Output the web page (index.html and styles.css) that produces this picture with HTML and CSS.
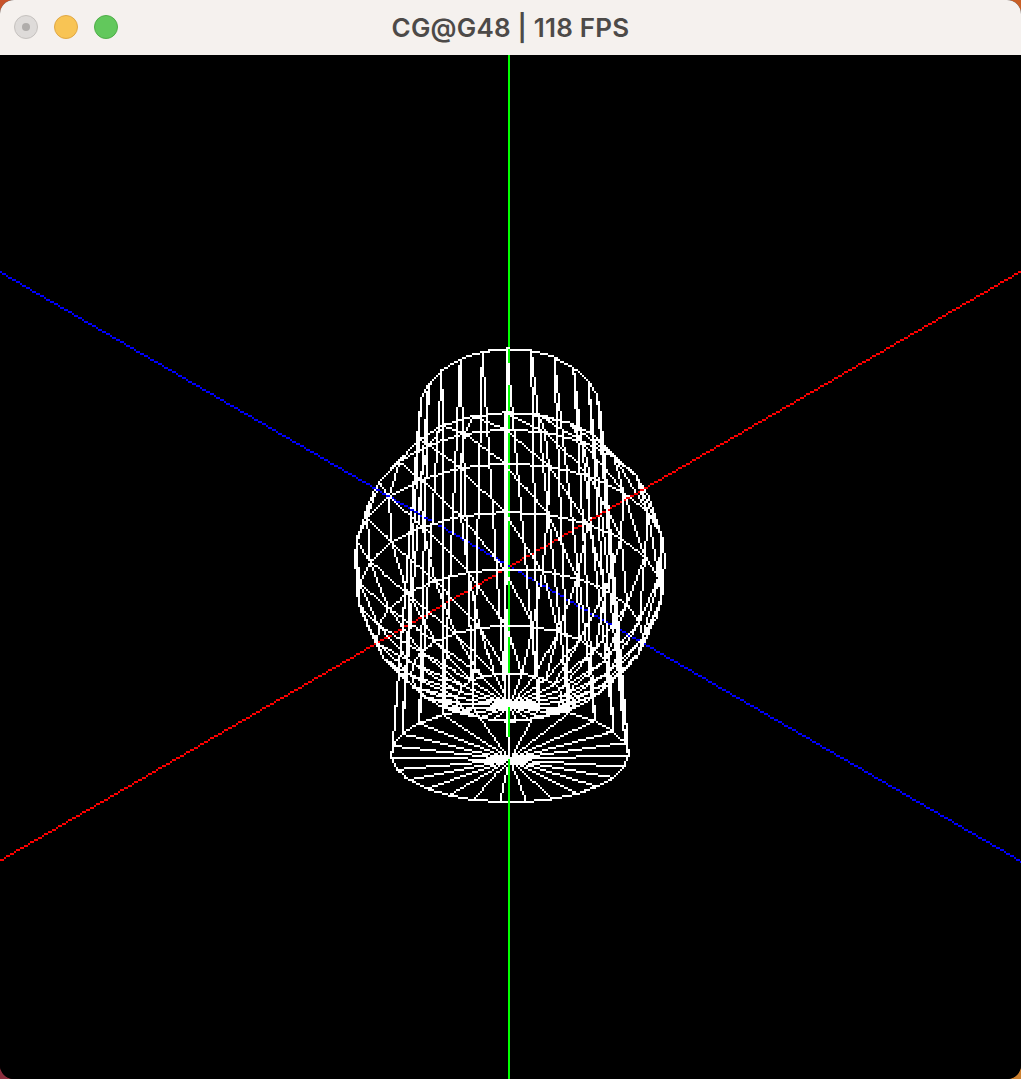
FILE: index.html
```html
<!DOCTYPE html>
<html lang="en">
<head>
    <meta charset="UTF-8">
    <title>CG@G48 | 118 FPS</title>
    <link rel="stylesheet" href="styles.css">
</head>
<body>
    <div class="window">
        <div class="titlebar">
            <div class="lights">
                <span class="light light-close"></span>
                <span class="light light-min"></span>
                <span class="light light-max"></span>
            </div>
            <div class="title">CG@G48 | 118 FPS</div>
        </div>
        <canvas id="view" class="view" width="511" height="512"></canvas>
    </div>
    <script src="app.js"></script>
</body>
</html>
```

FILE: styles.css
```css
html, body {
    margin: 0;
    padding: 0;
    height: 100%;
}
body {
    width: 1021px;
    height: 1079px;
    overflow: hidden;
    background:
        linear-gradient(90deg, #c8522a, #c95f25) top / 100% 50% no-repeat,
        linear-gradient(90deg, #8a2c3c, #cc802f) bottom / 100% 50% no-repeat;
}
.window {
    width: 1021px;
    height: 1079px;
    border-radius: 14px;
    overflow: hidden;
    display: flex;
    flex-direction: column;
    background: #000;
}
.titlebar {
    height: 55px;
    flex: none;
    position: relative;
    display: flex;
    align-items: center;
    justify-content: center;
    background: #f5f1ee;
}
.lights {
    position: absolute;
    left: 14px;
    top: 15px;
    display: flex;
    gap: 16px;
}
.light {
    width: 24px;
    height: 24px;
    box-sizing: border-box;
    border-radius: 50%;
    border: 1px solid;
    display: flex;
    align-items: center;
    justify-content: center;
}
.light-close {
    background: #dedbd9;
    border-color: #c6c2bf;
}
.light-close::after {
    content: "";
    width: 8px;
    height: 8px;
    border-radius: 50%;
    background: #b0adab;
}
.light-min {
    background: #f8c454;
    border-color: #e0a845;
}
.light-max {
    background: #62c85c;
    border-color: #4fae48;
}
.title {
    font-family: Inter, "Liberation Sans", sans-serif;
    font-size: 26px;
    font-weight: 600;
    letter-spacing: 0.2px;
    color: #4d4a48;
    white-space: nowrap;
}
.view {
    display: block;
    flex: none;
    width: 1022px;
    height: 1024px;
    image-rendering: pixelated;
}
```

FILE: app.js
```js
// wireframe scene: sphere + cylinder on the y axis, camera at (5,-5,5), 60 deg fov
const canvas = document.getElementById('view');
const ctx = canvas.getContext('2d');
const W = canvas.width, H = canvas.height;
const img = ctx.createImageData(W, H);
const zbuf = new Float32Array(W * H).fill(Infinity);

const SLICES = 25, STACKS = 10;
const WHITE = [255, 255, 255], RED = [255, 0, 0], GREEN = [0, 255, 0], BLUE = [0, 0, 255];

const eye = [5, -5, 5];
const R = [Math.SQRT1_2, 0, -Math.SQRT1_2];
const U = [1 / Math.sqrt(6), 2 / Math.sqrt(6), 1 / Math.sqrt(6)];
const F = [-1 / Math.sqrt(3), 1 / Math.sqrt(3), -1 / Math.sqrt(3)];
const focal = 256 / Math.tan(Math.PI / 6);
const CX = 254.9, CY = 255.8;
const NEAR = 1;

function dot(a, b) { return a[0] * b[0] + a[1] * b[1] + a[2] * b[2]; }

function toView(p) {
    const d = [p[0] - eye[0], p[1] - eye[1], p[2] - eye[2]];
    return [dot(d, R), dot(d, U), dot(d, F)];
}

function plot(x, y, z, c) {
    if (x < 0 || y < 0 || x >= W || y >= H) return;
    const i = y * W + x;
    if (z > zbuf[i]) return;
    zbuf[i] = z;
    img.data[i * 4] = c[0];
    img.data[i * 4 + 1] = c[1];
    img.data[i * 4 + 2] = c[2];
}

function line(p, q, c) {
    let a = toView(p), b = toView(q);
    if (a[2] < NEAR && b[2] < NEAR) return;
    if (a[2] < NEAR || b[2] < NEAR) {
        const t = (NEAR - a[2]) / (b[2] - a[2]);
        const m = [a[0] + (b[0] - a[0]) * t, a[1] + (b[1] - a[1]) * t, NEAR];
        if (a[2] < NEAR) a = m; else b = m;
    }
    const x0 = CX + a[0] * focal / a[2], y0 = CY - a[1] * focal / a[2];
    const x1 = CX + b[0] * focal / b[2], y1 = CY - b[1] * focal / b[2];
    const n = Math.ceil(Math.max(Math.abs(x1 - x0), Math.abs(y1 - y0))) || 1;
    for (let i = 0; i <= n; i++) {
        const t = i / n;
        // perspective correct depth
        const iz = (1 - t) / a[2] + t / b[2];
        plot(Math.floor(x0 + (x1 - x0) * t), Math.floor(y0 + (y1 - y0) * t), 1 / iz, c);
    }
}

function tri(a, b, c) {
    line(a, b, WHITE);
    line(b, c, WHITE);
    line(c, a, WHITE);
}

// back face culling: n is the surface normal at point c
function faces(n, c) {
    return dot(n, [eye[0] - c[0], eye[1] - c[1], eye[2] - c[2]]) > 0;
}

function center(a, b, c) {
    return [(a[0] + b[0] + c[0]) / 3, (a[1] + b[1] + c[1]) / 3, (a[2] + b[2] + c[2]) / 3];
}

function sphere(r) {
    const pt = (i, j) => {
        const phi = Math.PI * i / STACKS, th = 2 * Math.PI * j / SLICES;
        return [r * Math.sin(phi) * Math.sin(th), r * Math.cos(phi), r * Math.sin(phi) * Math.cos(th)];
    };
    const put = (a, b, c) => {
        const m = center(a, b, c);
        if (faces(m, m)) tri(a, b, c);
    };
    for (let i = 0; i < STACKS; i++) {
        for (let j = 0; j < SLICES; j++) {
            put(pt(i, j), pt(i, j + 1), pt(i + 1, j + 1));
            put(pt(i, j), pt(i + 1, j), pt(i + 1, j + 1));
        }
    }
}

function cylinder(r, h) {
    const pt = (y, j) => {
        const th = 2 * Math.PI * j / SLICES;
        return [r * Math.sin(th), y, r * Math.cos(th)];
    };
    const put = (a, b, c) => {
        const m = center(a, b, c);
        if (faces([m[0], 0, m[2]], m)) tri(a, b, c);
    };
    for (let j = 0; j < SLICES; j++) {
        // top cap points away from the camera, only the bottom one shows
        tri([0, -h, 0], pt(-h, j), pt(-h, j + 1));
        put(pt(h, j), pt(h, j + 1), pt(-h, j + 1));
        put(pt(h, j), pt(-h, j), pt(-h, j + 1));
    }
}

line([-100, 0, 0], [100, 0, 0], RED);
line([0, -100, 0], [0, 100, 0], GREEN);
line([0, 0, -100], [0, 0, 100], BLUE);
sphere(1.5);
cylinder(1, 2);

for (let i = 3; i < img.data.length; i += 4) img.data[i] = 255;
ctx.putImageData(img, 0, 0);
```
